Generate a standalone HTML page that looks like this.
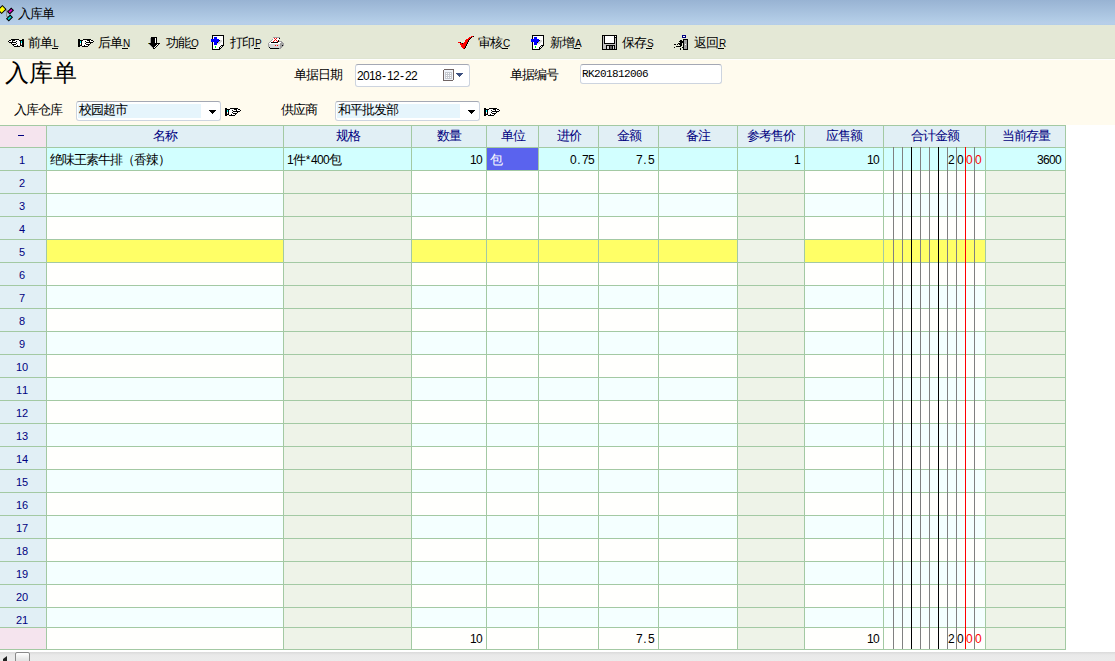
<!DOCTYPE html>
<html><head><meta charset="utf-8"><style>
html,body{margin:0;padding:0;}
body{width:1115px;height:661px;overflow:hidden;position:relative;background:#ffffff;font-family:"Liberation Sans",sans-serif;font-size:12px;color:#000;}
div,span,svg{position:absolute;}
span{white-space:nowrap;line-height:16px;}
.cj{font-size:13px;letter-spacing:-1px;font-weight:500;}
.a{font-family:"Liberation Sans",sans-serif;font-size:12px;}
i{font-style:normal;display:inline-block;width:6px;text-align:center;}
.hd{color:#000080;text-align:center;}
.rn{color:#000080;text-align:center;}
</style></head><body>
<div style="left:0;top:0;width:1115px;height:25px;background:linear-gradient(#98b3d3 0px,#b2cce6 20px,#b8cee9 23px,#b3cde8 25px);"></div>
<svg style="left:0;top:3px" width="16" height="20" viewBox="0 0 16 20"><path d="M4 7.5 H8 M6.5 7.5 V13.5 H8.5" stroke="#909090" fill="none"/><rect x="-0.5" y="3.5" width="5" height="6" transform="rotate(45 2 6.5)" fill="#ffff00" stroke="#000"/><rect x="9" y="5.5" width="3" height="5" transform="rotate(45 10.5 8)" fill="#e000c0" stroke="#000"/><rect x="8" y="12.5" width="3" height="5" transform="rotate(45 9.5 15)" fill="#00d0d0" stroke="#000"/></svg>
<span class="cj" style="left:18px;top:6px">入库单</span>
<div style="left:0;top:25px;width:1115px;height:34px;background:linear-gradient(#e4e8d6 0,#e4e8d6 33px,#dfe4d1 33px);"></div>
<div style="left:0;top:59px;width:1115px;height:1px;background:#ffffff;"></div>
<div style="left:0;top:60px;width:1115px;height:65px;background:#fffbee;"></div>

<span style="left:5px;top:58px;font-size:24px;line-height:30px;font-weight:500">入库单</span>

<span class="cj" style="left:294px;top:67px">单据日期</span>
<div style="left:355px;top:64px;width:113px;height:21px;border:1px solid #cdd4df;border-top-color:#a4a8b4;border-radius:3px;background:#fff"></div>
<span class="a" style="left:357px;top:68px"><i>2</i><i>0</i><i>1</i><i>8</i><i>-</i><i>1</i><i>2</i><i>-</i><i>2</i><i>2</i></span>
<svg style="left:443px;top:69px" width="21" height="13" viewBox="0 0 21 13" shape-rendering="crispEdges">
<rect x="0.5" y="0.5" width="10" height="11" rx="1.5" fill="#f0f4fb" stroke="#706464"/>
<rect x="2" y="3" width="7" height="7" fill="#c4c8d0"/>
<rect x="3" y="4" width="1" height="1" fill="#fff"/><rect x="5" y="4" width="1" height="1" fill="#fff"/><rect x="7" y="4" width="1" height="1" fill="#fff"/>
<rect x="3" y="6" width="1" height="1" fill="#fff"/><rect x="5" y="6" width="1" height="1" fill="#fff"/><rect x="7" y="6" width="1" height="1" fill="#fff"/>
<rect x="3" y="8" width="1" height="1" fill="#fff"/><rect x="5" y="8" width="1" height="1" fill="#fff"/><rect x="7" y="8" width="1" height="1" fill="#fff"/>
<rect x="13" y="4" width="7" height="1" fill="#3c5080"/><rect x="14" y="5" width="5" height="1" fill="#3c5080"/><rect x="15" y="6" width="3" height="1" fill="#3c5080"/><rect x="16" y="7" width="1" height="1" fill="#3c5080"/>
</svg>

<span class="cj" style="left:510px;top:67px">单据编号</span>
<div style="left:580px;top:64px;width:140px;height:18px;border:1px solid #cdd4df;border-top-color:#a4a8b4;border-radius:3px;background:#fff"></div>
<span class="a" style="left:582px;top:66px;font-family:'Liberation Mono',monospace;font-size:11px"><i>R</i><i>K</i><i>2</i><i>0</i><i>1</i><i>8</i><i>1</i><i>2</i><i>0</i><i>0</i><i>6</i></span>

<div style="left:76px;top:101px;width:143px;height:18px;border:1px solid #cdd4df;border-top-color:#a4a8b4;border-radius:3px;background:#fff"></div><div style="left:78px;top:104px;width:123px;height:14px;background:#e6f5fc"></div><span class="cj" style="left:79px;top:102px">校园超市</span><svg style="left:209px;top:110px" width="7" height="4" viewBox="0 0 7 4" shape-rendering="crispEdges"><rect x="0" y="0" width="7" height="1"/><rect x="1" y="1" width="5" height="1"/><rect x="2" y="2" width="3" height="1"/><rect x="3" y="3" width="1" height="1"/></svg><span class="cj" style="left:14px;top:102px">入库仓库</span>
<div style="left:335px;top:101px;width:143px;height:18px;border:1px solid #cdd4df;border-top-color:#a4a8b4;border-radius:3px;background:#fff"></div><div style="left:337px;top:104px;width:123px;height:14px;background:#e6f5fc"></div><span class="cj" style="left:338px;top:102px">和平批发部</span><svg style="left:468px;top:110px" width="7" height="4" viewBox="0 0 7 4" shape-rendering="crispEdges"><rect x="0" y="0" width="7" height="1"/><rect x="1" y="1" width="5" height="1"/><rect x="2" y="2" width="3" height="1"/><rect x="3" y="3" width="1" height="1"/></svg><span class="cj" style="left:281px;top:102px">供应商</span>

<svg style="left:8px;top:39px" width="16" height="8" viewBox="0 0 16 8" shape-rendering="crispEdges"><rect x="3" y="0" width="8" height="1" fill="#000000"/><rect x="14" y="0" width="2" height="1" fill="#000000"/><rect x="1" y="1" width="2" height="1" fill="#000000"/><rect x="3" y="1" width="1" height="1" fill="#ffffff"/><rect x="4" y="1" width="3" height="1" fill="#000000"/><rect x="7" y="1" width="4" height="1" fill="#ffffff"/><rect x="11" y="1" width="5" height="1" fill="#000000"/><rect x="0" y="2" width="1" height="1" fill="#000000"/><rect x="1" y="2" width="3" height="1" fill="#ffffff"/><rect x="4" y="2" width="1" height="1" fill="#000000"/><rect x="5" y="2" width="3" height="1" fill="#ffffff"/><rect x="8" y="2" width="1" height="1" fill="#000000"/><rect x="9" y="2" width="3" height="1" fill="#ffffff"/><rect x="12" y="2" width="1" height="1" fill="#000000"/><rect x="13" y="2" width="1" height="1" fill="#00ffff"/><rect x="14" y="2" width="2" height="1" fill="#000000"/><rect x="1" y="3" width="7" height="1" fill="#000000"/><rect x="8" y="3" width="4" height="1" fill="#ffffff"/><rect x="12" y="3" width="1" height="1" fill="#000000"/><rect x="13" y="3" width="1" height="1" fill="#00ffff"/><rect x="14" y="3" width="2" height="1" fill="#000000"/><rect x="3" y="4" width="1" height="1" fill="#000000"/><rect x="4" y="4" width="4" height="1" fill="#ffffff"/><rect x="8" y="4" width="1" height="1" fill="#000000"/><rect x="9" y="4" width="3" height="1" fill="#ffffff"/><rect x="12" y="4" width="1" height="1" fill="#000000"/><rect x="13" y="4" width="1" height="1" fill="#ffffff"/><rect x="14" y="4" width="2" height="1" fill="#000000"/><rect x="4" y="5" width="4" height="1" fill="#000000"/><rect x="8" y="5" width="4" height="1" fill="#ffffff"/><rect x="12" y="5" width="1" height="1" fill="#000000"/><rect x="13" y="5" width="1" height="1" fill="#f0d0d0"/><rect x="14" y="5" width="2" height="1" fill="#000000"/><rect x="5" y="6" width="1" height="1" fill="#000000"/><rect x="6" y="6" width="3" height="1" fill="#ffffff"/><rect x="9" y="6" width="1" height="1" fill="#000000"/><rect x="10" y="6" width="2" height="1" fill="#ffffff"/><rect x="12" y="6" width="4" height="1" fill="#000000"/><rect x="6" y="7" width="6" height="1" fill="#000000"/><rect x="14" y="7" width="2" height="1" fill="#000000"/></svg><svg style="left:78px;top:39px" width="16" height="8" viewBox="0 0 16 8" shape-rendering="crispEdges"><rect x="0" y="0" width="2" height="1" fill="#000000"/><rect x="5" y="0" width="8" height="1" fill="#000000"/><rect x="0" y="1" width="5" height="1" fill="#000000"/><rect x="5" y="1" width="4" height="1" fill="#ffffff"/><rect x="9" y="1" width="3" height="1" fill="#000000"/><rect x="12" y="1" width="1" height="1" fill="#ffffff"/><rect x="13" y="1" width="2" height="1" fill="#000000"/><rect x="0" y="2" width="2" height="1" fill="#000000"/><rect x="2" y="2" width="1" height="1" fill="#00ffff"/><rect x="3" y="2" width="1" height="1" fill="#000000"/><rect x="4" y="2" width="3" height="1" fill="#ffffff"/><rect x="7" y="2" width="1" height="1" fill="#000000"/><rect x="8" y="2" width="3" height="1" fill="#ffffff"/><rect x="11" y="2" width="1" height="1" fill="#000000"/><rect x="12" y="2" width="3" height="1" fill="#ffffff"/><rect x="15" y="2" width="1" height="1" fill="#000000"/><rect x="0" y="3" width="2" height="1" fill="#000000"/><rect x="2" y="3" width="1" height="1" fill="#00ffff"/><rect x="3" y="3" width="1" height="1" fill="#000000"/><rect x="4" y="3" width="4" height="1" fill="#ffffff"/><rect x="8" y="3" width="7" height="1" fill="#000000"/><rect x="0" y="4" width="2" height="1" fill="#000000"/><rect x="2" y="4" width="1" height="1" fill="#ffffff"/><rect x="3" y="4" width="1" height="1" fill="#000000"/><rect x="4" y="4" width="3" height="1" fill="#ffffff"/><rect x="7" y="4" width="1" height="1" fill="#000000"/><rect x="8" y="4" width="4" height="1" fill="#ffffff"/><rect x="12" y="4" width="1" height="1" fill="#000000"/><rect x="0" y="5" width="2" height="1" fill="#000000"/><rect x="2" y="5" width="1" height="1" fill="#f0d0d0"/><rect x="3" y="5" width="1" height="1" fill="#000000"/><rect x="4" y="5" width="4" height="1" fill="#ffffff"/><rect x="8" y="5" width="4" height="1" fill="#000000"/><rect x="0" y="6" width="4" height="1" fill="#000000"/><rect x="4" y="6" width="2" height="1" fill="#ffffff"/><rect x="6" y="6" width="1" height="1" fill="#000000"/><rect x="7" y="6" width="3" height="1" fill="#ffffff"/><rect x="10" y="6" width="1" height="1" fill="#000000"/><rect x="0" y="7" width="2" height="1" fill="#000000"/><rect x="4" y="7" width="6" height="1" fill="#000000"/></svg><svg style="left:148px;top:37px" width="12" height="12" viewBox="0 0 12 12" shape-rendering="crispEdges"><rect x="3" y="0" width="6" height="1" fill="#000000"/><rect x="2" y="1" width="1" height="1" fill="#a0a0a0"/><rect x="3" y="1" width="4" height="1" fill="#000000"/><rect x="7" y="1" width="1" height="1" fill="#ffffff"/><rect x="8" y="1" width="1" height="1" fill="#000000"/><rect x="2" y="2" width="1" height="1" fill="#a0a0a0"/><rect x="3" y="2" width="4" height="1" fill="#000000"/><rect x="7" y="2" width="1" height="1" fill="#ffffff"/><rect x="8" y="2" width="1" height="1" fill="#000000"/><rect x="2" y="3" width="1" height="1" fill="#a0a0a0"/><rect x="3" y="3" width="4" height="1" fill="#000000"/><rect x="7" y="3" width="1" height="1" fill="#ffffff"/><rect x="8" y="3" width="1" height="1" fill="#000000"/><rect x="2" y="4" width="1" height="1" fill="#a0a0a0"/><rect x="3" y="4" width="4" height="1" fill="#000000"/><rect x="7" y="4" width="1" height="1" fill="#ffffff"/><rect x="8" y="4" width="1" height="1" fill="#000000"/><rect x="2" y="5" width="1" height="1" fill="#a0a0a0"/><rect x="3" y="5" width="4" height="1" fill="#000000"/><rect x="7" y="5" width="1" height="1" fill="#ffffff"/><rect x="8" y="5" width="1" height="1" fill="#000000"/><rect x="0" y="6" width="1" height="1" fill="#808000"/><rect x="1" y="6" width="11" height="1" fill="#000000"/><rect x="1" y="7" width="1" height="1" fill="#a0a0a0"/><rect x="2" y="7" width="7" height="1" fill="#000000"/><rect x="9" y="7" width="1" height="1" fill="#ffffff"/><rect x="10" y="7" width="1" height="1" fill="#000000"/><rect x="2" y="8" width="1" height="1" fill="#a0a0a0"/><rect x="3" y="8" width="5" height="1" fill="#000000"/><rect x="8" y="8" width="1" height="1" fill="#ffffff"/><rect x="9" y="8" width="1" height="1" fill="#000000"/><rect x="3" y="9" width="1" height="1" fill="#a0a0a0"/><rect x="4" y="9" width="3" height="1" fill="#000000"/><rect x="7" y="9" width="1" height="1" fill="#ffffff"/><rect x="8" y="9" width="1" height="1" fill="#000000"/><rect x="4" y="10" width="1" height="1" fill="#a0a0a0"/><rect x="5" y="10" width="1" height="1" fill="#000000"/><rect x="6" y="10" width="1" height="1" fill="#ffffff"/><rect x="7" y="10" width="1" height="1" fill="#000000"/><rect x="5" y="11" width="2" height="1" fill="#000000"/></svg><svg style="left:211px;top:35px" width="13" height="15" viewBox="0 0 13 15" shape-rendering="crispEdges"><rect x="1" y="0" width="12" height="1" fill="#000000"/><rect x="1" y="1" width="1" height="1" fill="#000000"/><rect x="2" y="1" width="10" height="1" fill="#ffffff"/><rect x="12" y="1" width="1" height="1" fill="#000000"/><rect x="1" y="2" width="1" height="1" fill="#000000"/><rect x="2" y="2" width="1" height="1" fill="#ffffff"/><rect x="3" y="2" width="3" height="1" fill="#0000ff"/><rect x="6" y="2" width="6" height="1" fill="#ffffff"/><rect x="12" y="2" width="1" height="1" fill="#000000"/><rect x="1" y="3" width="1" height="1" fill="#000000"/><rect x="2" y="3" width="1" height="1" fill="#ffffff"/><rect x="3" y="3" width="3" height="1" fill="#0000ff"/><rect x="6" y="3" width="6" height="1" fill="#ffffff"/><rect x="12" y="3" width="1" height="1" fill="#000000"/><rect x="0" y="4" width="8" height="1" fill="#0000ff"/><rect x="8" y="4" width="4" height="1" fill="#ffffff"/><rect x="12" y="4" width="1" height="1" fill="#000000"/><rect x="0" y="5" width="8" height="1" fill="#0000ff"/><rect x="8" y="5" width="1" height="1" fill="#000000"/><rect x="9" y="5" width="2" height="1" fill="#d4d4d4"/><rect x="11" y="5" width="1" height="1" fill="#ffffff"/><rect x="12" y="5" width="1" height="1" fill="#000000"/><rect x="0" y="6" width="8" height="1" fill="#0000ff"/><rect x="8" y="6" width="3" height="1" fill="#d4d4d4"/><rect x="11" y="6" width="1" height="1" fill="#ffffff"/><rect x="12" y="6" width="1" height="1" fill="#000000"/><rect x="1" y="7" width="1" height="1" fill="#000000"/><rect x="2" y="7" width="1" height="1" fill="#ffffff"/><rect x="3" y="7" width="3" height="1" fill="#0000ff"/><rect x="6" y="7" width="1" height="1" fill="#000000"/><rect x="7" y="7" width="3" height="1" fill="#d4d4d4"/><rect x="10" y="7" width="2" height="1" fill="#ffffff"/><rect x="12" y="7" width="1" height="1" fill="#000000"/><rect x="1" y="8" width="1" height="1" fill="#000000"/><rect x="2" y="8" width="1" height="1" fill="#ffffff"/><rect x="3" y="8" width="3" height="1" fill="#0000ff"/><rect x="6" y="8" width="3" height="1" fill="#d4d4d4"/><rect x="9" y="8" width="3" height="1" fill="#ffffff"/><rect x="12" y="8" width="1" height="1" fill="#000000"/><rect x="1" y="9" width="1" height="1" fill="#000000"/><rect x="2" y="9" width="1" height="1" fill="#ffffff"/><rect x="3" y="9" width="3" height="1" fill="#0000ff"/><rect x="6" y="9" width="6" height="1" fill="#ffffff"/><rect x="12" y="9" width="1" height="1" fill="#000000"/><rect x="1" y="10" width="1" height="1" fill="#000000"/><rect x="2" y="10" width="8" height="1" fill="#ffffff"/><rect x="10" y="10" width="3" height="1" fill="#000000"/><rect x="1" y="11" width="1" height="1" fill="#000000"/><rect x="2" y="11" width="2" height="1" fill="#ffffff"/><rect x="4" y="11" width="1" height="1" fill="#00ff00"/><rect x="5" y="11" width="4" height="1" fill="#ffffff"/><rect x="9" y="11" width="1" height="1" fill="#000000"/><rect x="10" y="11" width="1" height="1" fill="#ffffff"/><rect x="11" y="11" width="1" height="1" fill="#000000"/><rect x="1" y="12" width="1" height="1" fill="#000000"/><rect x="2" y="12" width="2" height="1" fill="#ffffff"/><rect x="4" y="12" width="1" height="1" fill="#00ff00"/><rect x="5" y="12" width="3" height="1" fill="#ffffff"/><rect x="8" y="12" width="1" height="1" fill="#000000"/><rect x="9" y="12" width="1" height="1" fill="#ffffff"/><rect x="10" y="12" width="1" height="1" fill="#000000"/><rect x="1" y="13" width="1" height="1" fill="#000000"/><rect x="2" y="13" width="6" height="1" fill="#ffffff"/><rect x="8" y="13" width="2" height="1" fill="#000000"/><rect x="1" y="14" width="8" height="1" fill="#000000"/></svg><svg style="left:268px;top:37px" width="16" height="12" viewBox="0 0 16 12" shape-rendering="crispEdges"><rect x="5" y="0" width="7" height="1" fill="#a0a0a0"/><rect x="5" y="1" width="1" height="1" fill="#ffffff"/><rect x="6" y="1" width="1" height="1" fill="#ff0000"/><rect x="7" y="1" width="1" height="1" fill="#ffffff"/><rect x="8" y="1" width="1" height="1" fill="#ff0000"/><rect x="9" y="1" width="2" height="1" fill="#ffffff"/><rect x="11" y="1" width="1" height="1" fill="#000000"/><rect x="4" y="2" width="1" height="1" fill="#a0a0a0"/><rect x="5" y="2" width="2" height="1" fill="#ffffff"/><rect x="7" y="2" width="1" height="1" fill="#ff0000"/><rect x="8" y="2" width="3" height="1" fill="#ffffff"/><rect x="3" y="3" width="1" height="1" fill="#a0a0a0"/><rect x="4" y="3" width="2" height="1" fill="#ffffff"/><rect x="6" y="3" width="1" height="1" fill="#ff0000"/><rect x="7" y="3" width="1" height="1" fill="#ffffff"/><rect x="8" y="3" width="1" height="1" fill="#ff0000"/><rect x="9" y="3" width="1" height="1" fill="#ffffff"/><rect x="10" y="3" width="1" height="1" fill="#000000"/><rect x="2" y="4" width="1" height="1" fill="#a0a0a0"/><rect x="3" y="4" width="2" height="1" fill="#ffffff"/><rect x="5" y="4" width="1" height="1" fill="#ff0000"/><rect x="6" y="4" width="3" height="1" fill="#ffffff"/><rect x="9" y="4" width="1" height="1" fill="#ff0000"/><rect x="10" y="4" width="1" height="1" fill="#000000"/><rect x="11" y="4" width="3" height="1" fill="#a0a0a0"/><rect x="1" y="5" width="1" height="1" fill="#a0a0a0"/><rect x="2" y="5" width="1" height="1" fill="#ffffff"/><rect x="3" y="5" width="7" height="1" fill="#000000"/><rect x="10" y="5" width="3" height="1" fill="#ffffff"/><rect x="13" y="5" width="2" height="1" fill="#a0a0a0"/><rect x="0" y="6" width="1" height="1" fill="#a0a0a0"/><rect x="1" y="6" width="11" height="1" fill="#ffffff"/><rect x="12" y="6" width="4" height="1" fill="#a0a0a0"/><rect x="0" y="7" width="1" height="1" fill="#a0a0a0"/><rect x="1" y="7" width="11" height="1" fill="#d4d4d4"/><rect x="12" y="7" width="4" height="1" fill="#a0a0a0"/><rect x="0" y="8" width="1" height="1" fill="#a0a0a0"/><rect x="1" y="8" width="6" height="1" fill="#d4d4d4"/><rect x="7" y="8" width="1" height="1" fill="#ff0000"/><rect x="8" y="8" width="1" height="1" fill="#d4d4d4"/><rect x="9" y="8" width="1" height="1" fill="#ff0000"/><rect x="10" y="8" width="2" height="1" fill="#d4d4d4"/><rect x="12" y="8" width="2" height="1" fill="#a0a0a0"/><rect x="14" y="8" width="1" height="1" fill="#000000"/><rect x="15" y="8" width="1" height="1" fill="#a0a0a0"/><rect x="0" y="9" width="1" height="1" fill="#a0a0a0"/><rect x="1" y="9" width="11" height="1" fill="#d4d4d4"/><rect x="12" y="9" width="3" height="1" fill="#a0a0a0"/><rect x="1" y="10" width="1" height="1" fill="#000000"/><rect x="2" y="10" width="10" height="1" fill="#d4d4d4"/><rect x="12" y="10" width="2" height="1" fill="#a0a0a0"/><rect x="2" y="11" width="9" height="1" fill="#000000"/><rect x="11" y="11" width="2" height="1" fill="#a0a0a0"/></svg><svg style="left:531px;top:35px" width="13" height="15" viewBox="0 0 13 15" shape-rendering="crispEdges"><rect x="1" y="0" width="12" height="1" fill="#000000"/><rect x="1" y="1" width="1" height="1" fill="#000000"/><rect x="2" y="1" width="10" height="1" fill="#ffffff"/><rect x="12" y="1" width="1" height="1" fill="#000000"/><rect x="1" y="2" width="1" height="1" fill="#000000"/><rect x="2" y="2" width="1" height="1" fill="#ffffff"/><rect x="3" y="2" width="3" height="1" fill="#0000ff"/><rect x="6" y="2" width="6" height="1" fill="#ffffff"/><rect x="12" y="2" width="1" height="1" fill="#000000"/><rect x="1" y="3" width="1" height="1" fill="#000000"/><rect x="2" y="3" width="1" height="1" fill="#ffffff"/><rect x="3" y="3" width="3" height="1" fill="#0000ff"/><rect x="6" y="3" width="6" height="1" fill="#ffffff"/><rect x="12" y="3" width="1" height="1" fill="#000000"/><rect x="0" y="4" width="8" height="1" fill="#0000ff"/><rect x="8" y="4" width="4" height="1" fill="#ffffff"/><rect x="12" y="4" width="1" height="1" fill="#000000"/><rect x="0" y="5" width="8" height="1" fill="#0000ff"/><rect x="8" y="5" width="1" height="1" fill="#000000"/><rect x="9" y="5" width="2" height="1" fill="#d4d4d4"/><rect x="11" y="5" width="1" height="1" fill="#ffffff"/><rect x="12" y="5" width="1" height="1" fill="#000000"/><rect x="0" y="6" width="8" height="1" fill="#0000ff"/><rect x="8" y="6" width="3" height="1" fill="#d4d4d4"/><rect x="11" y="6" width="1" height="1" fill="#ffffff"/><rect x="12" y="6" width="1" height="1" fill="#000000"/><rect x="1" y="7" width="1" height="1" fill="#000000"/><rect x="2" y="7" width="1" height="1" fill="#ffffff"/><rect x="3" y="7" width="3" height="1" fill="#0000ff"/><rect x="6" y="7" width="1" height="1" fill="#000000"/><rect x="7" y="7" width="3" height="1" fill="#d4d4d4"/><rect x="10" y="7" width="2" height="1" fill="#ffffff"/><rect x="12" y="7" width="1" height="1" fill="#000000"/><rect x="1" y="8" width="1" height="1" fill="#000000"/><rect x="2" y="8" width="1" height="1" fill="#ffffff"/><rect x="3" y="8" width="3" height="1" fill="#0000ff"/><rect x="6" y="8" width="3" height="1" fill="#d4d4d4"/><rect x="9" y="8" width="3" height="1" fill="#ffffff"/><rect x="12" y="8" width="1" height="1" fill="#000000"/><rect x="1" y="9" width="1" height="1" fill="#000000"/><rect x="2" y="9" width="1" height="1" fill="#ffffff"/><rect x="3" y="9" width="3" height="1" fill="#0000ff"/><rect x="6" y="9" width="6" height="1" fill="#ffffff"/><rect x="12" y="9" width="1" height="1" fill="#000000"/><rect x="1" y="10" width="1" height="1" fill="#000000"/><rect x="2" y="10" width="8" height="1" fill="#ffffff"/><rect x="10" y="10" width="3" height="1" fill="#000000"/><rect x="1" y="11" width="1" height="1" fill="#000000"/><rect x="2" y="11" width="2" height="1" fill="#ffffff"/><rect x="4" y="11" width="1" height="1" fill="#00ff00"/><rect x="5" y="11" width="4" height="1" fill="#ffffff"/><rect x="9" y="11" width="1" height="1" fill="#000000"/><rect x="10" y="11" width="1" height="1" fill="#ffffff"/><rect x="11" y="11" width="1" height="1" fill="#000000"/><rect x="1" y="12" width="1" height="1" fill="#000000"/><rect x="2" y="12" width="2" height="1" fill="#ffffff"/><rect x="4" y="12" width="1" height="1" fill="#00ff00"/><rect x="5" y="12" width="3" height="1" fill="#ffffff"/><rect x="8" y="12" width="1" height="1" fill="#000000"/><rect x="9" y="12" width="1" height="1" fill="#ffffff"/><rect x="10" y="12" width="1" height="1" fill="#000000"/><rect x="1" y="13" width="1" height="1" fill="#000000"/><rect x="2" y="13" width="6" height="1" fill="#ffffff"/><rect x="8" y="13" width="2" height="1" fill="#000000"/><rect x="1" y="14" width="8" height="1" fill="#000000"/></svg><svg style="left:602px;top:35px" width="15" height="15" viewBox="0 0 15 15" shape-rendering="crispEdges"><rect x="0" y="0" width="15" height="1" fill="#000000"/><rect x="0" y="1" width="1" height="1" fill="#000000"/><rect x="1" y="1" width="1" height="1" fill="#c0c0c0"/><rect x="2" y="1" width="1" height="1" fill="#000000"/><rect x="3" y="1" width="9" height="1" fill="#ffffff"/><rect x="12" y="1" width="1" height="1" fill="#000000"/><rect x="13" y="1" width="1" height="1" fill="#ffffff"/><rect x="14" y="1" width="1" height="1" fill="#000000"/><rect x="0" y="2" width="1" height="1" fill="#000000"/><rect x="1" y="2" width="1" height="1" fill="#c0c0c0"/><rect x="2" y="2" width="1" height="1" fill="#000000"/><rect x="3" y="2" width="9" height="1" fill="#ffffff"/><rect x="12" y="2" width="3" height="1" fill="#000000"/><rect x="0" y="3" width="1" height="1" fill="#000000"/><rect x="1" y="3" width="1" height="1" fill="#c0c0c0"/><rect x="2" y="3" width="1" height="1" fill="#000000"/><rect x="3" y="3" width="9" height="1" fill="#ffffff"/><rect x="12" y="3" width="1" height="1" fill="#000000"/><rect x="13" y="3" width="1" height="1" fill="#c0c0c0"/><rect x="14" y="3" width="1" height="1" fill="#000000"/><rect x="0" y="4" width="1" height="1" fill="#000000"/><rect x="1" y="4" width="1" height="1" fill="#c0c0c0"/><rect x="2" y="4" width="1" height="1" fill="#000000"/><rect x="3" y="4" width="9" height="1" fill="#ffffff"/><rect x="12" y="4" width="1" height="1" fill="#000000"/><rect x="13" y="4" width="1" height="1" fill="#c0c0c0"/><rect x="14" y="4" width="1" height="1" fill="#000000"/><rect x="0" y="5" width="1" height="1" fill="#000000"/><rect x="1" y="5" width="1" height="1" fill="#c0c0c0"/><rect x="2" y="5" width="1" height="1" fill="#000000"/><rect x="3" y="5" width="9" height="1" fill="#ffffff"/><rect x="12" y="5" width="1" height="1" fill="#000000"/><rect x="13" y="5" width="1" height="1" fill="#c0c0c0"/><rect x="14" y="5" width="1" height="1" fill="#000000"/><rect x="0" y="6" width="1" height="1" fill="#000000"/><rect x="1" y="6" width="1" height="1" fill="#c0c0c0"/><rect x="2" y="6" width="1" height="1" fill="#000000"/><rect x="3" y="6" width="9" height="1" fill="#ffffff"/><rect x="12" y="6" width="1" height="1" fill="#000000"/><rect x="13" y="6" width="1" height="1" fill="#c0c0c0"/><rect x="14" y="6" width="1" height="1" fill="#000000"/><rect x="0" y="7" width="1" height="1" fill="#000000"/><rect x="1" y="7" width="1" height="1" fill="#c0c0c0"/><rect x="2" y="7" width="1" height="1" fill="#000000"/><rect x="3" y="7" width="9" height="1" fill="#ffffff"/><rect x="12" y="7" width="1" height="1" fill="#000000"/><rect x="13" y="7" width="1" height="1" fill="#c0c0c0"/><rect x="14" y="7" width="1" height="1" fill="#000000"/><rect x="0" y="8" width="1" height="1" fill="#000000"/><rect x="1" y="8" width="1" height="1" fill="#c0c0c0"/><rect x="2" y="8" width="11" height="1" fill="#000000"/><rect x="13" y="8" width="1" height="1" fill="#c0c0c0"/><rect x="14" y="8" width="1" height="1" fill="#000000"/><rect x="0" y="9" width="1" height="1" fill="#000000"/><rect x="1" y="9" width="13" height="1" fill="#c0c0c0"/><rect x="14" y="9" width="1" height="1" fill="#000000"/><rect x="0" y="10" width="1" height="1" fill="#000000"/><rect x="1" y="10" width="3" height="1" fill="#c0c0c0"/><rect x="4" y="10" width="9" height="1" fill="#000000"/><rect x="13" y="10" width="1" height="1" fill="#c0c0c0"/><rect x="14" y="10" width="1" height="1" fill="#000000"/><rect x="0" y="11" width="1" height="1" fill="#000000"/><rect x="1" y="11" width="3" height="1" fill="#c0c0c0"/><rect x="4" y="11" width="1" height="1" fill="#000000"/><rect x="5" y="11" width="2" height="1" fill="#d4d4d4"/><rect x="7" y="11" width="1" height="1" fill="#000000"/><rect x="8" y="11" width="2" height="1" fill="#606060"/><rect x="10" y="11" width="1" height="1" fill="#000000"/><rect x="11" y="11" width="1" height="1" fill="#d4d4d4"/><rect x="12" y="11" width="1" height="1" fill="#000000"/><rect x="13" y="11" width="1" height="1" fill="#c0c0c0"/><rect x="14" y="11" width="1" height="1" fill="#000000"/><rect x="0" y="12" width="1" height="1" fill="#000000"/><rect x="1" y="12" width="3" height="1" fill="#c0c0c0"/><rect x="4" y="12" width="1" height="1" fill="#000000"/><rect x="5" y="12" width="2" height="1" fill="#d4d4d4"/><rect x="7" y="12" width="1" height="1" fill="#000000"/><rect x="8" y="12" width="2" height="1" fill="#606060"/><rect x="10" y="12" width="1" height="1" fill="#000000"/><rect x="11" y="12" width="1" height="1" fill="#d4d4d4"/><rect x="12" y="12" width="1" height="1" fill="#000000"/><rect x="13" y="12" width="1" height="1" fill="#c0c0c0"/><rect x="14" y="12" width="1" height="1" fill="#000000"/><rect x="0" y="13" width="1" height="1" fill="#000000"/><rect x="1" y="13" width="3" height="1" fill="#c0c0c0"/><rect x="4" y="13" width="1" height="1" fill="#000000"/><rect x="5" y="13" width="2" height="1" fill="#d4d4d4"/><rect x="7" y="13" width="1" height="1" fill="#000000"/><rect x="8" y="13" width="2" height="1" fill="#606060"/><rect x="10" y="13" width="1" height="1" fill="#000000"/><rect x="11" y="13" width="1" height="1" fill="#d4d4d4"/><rect x="12" y="13" width="1" height="1" fill="#000000"/><rect x="13" y="13" width="1" height="1" fill="#c0c0c0"/><rect x="14" y="13" width="1" height="1" fill="#000000"/><rect x="0" y="14" width="15" height="1" fill="#000000"/></svg><svg style="left:674px;top:35px" width="14" height="15" viewBox="0 0 14 15" shape-rendering="crispEdges"><rect x="8" y="0" width="4" height="1" fill="#000080"/><rect x="8" y="1" width="1" height="1" fill="#000080"/><rect x="9" y="1" width="2" height="1" fill="#ffffff"/><rect x="11" y="1" width="1" height="1" fill="#000080"/><rect x="8" y="2" width="4" height="1" fill="#000080"/><rect x="9" y="4" width="5" height="1" fill="#000000"/><rect x="6" y="5" width="2" height="1" fill="#000000"/><rect x="9" y="5" width="1" height="1" fill="#000000"/><rect x="10" y="5" width="3" height="1" fill="#a0a0a0"/><rect x="13" y="5" width="1" height="1" fill="#000000"/><rect x="5" y="6" width="5" height="1" fill="#000000"/><rect x="10" y="6" width="3" height="1" fill="#a0a0a0"/><rect x="13" y="6" width="1" height="1" fill="#000000"/><rect x="6" y="7" width="4" height="1" fill="#000000"/><rect x="10" y="7" width="3" height="1" fill="#a0a0a0"/><rect x="13" y="7" width="1" height="1" fill="#000000"/><rect x="4" y="8" width="4" height="1" fill="#000000"/><rect x="9" y="8" width="1" height="1" fill="#000000"/><rect x="10" y="8" width="3" height="1" fill="#a0a0a0"/><rect x="13" y="8" width="1" height="1" fill="#000000"/><rect x="0" y="9" width="2" height="1" fill="#000000"/><rect x="3" y="9" width="1" height="1" fill="#000000"/><rect x="5" y="9" width="3" height="1" fill="#000000"/><rect x="9" y="9" width="1" height="1" fill="#000000"/><rect x="10" y="9" width="1" height="1" fill="#a0a0a0"/><rect x="11" y="9" width="1" height="1" fill="#ffffff"/><rect x="12" y="9" width="1" height="1" fill="#a0a0a0"/><rect x="13" y="9" width="1" height="1" fill="#000000"/><rect x="6" y="10" width="2" height="1" fill="#000000"/><rect x="9" y="10" width="1" height="1" fill="#000000"/><rect x="10" y="10" width="3" height="1" fill="#a0a0a0"/><rect x="13" y="10" width="1" height="1" fill="#000000"/><rect x="2" y="11" width="5" height="1" fill="#000000"/><rect x="9" y="11" width="1" height="1" fill="#000000"/><rect x="10" y="11" width="3" height="1" fill="#a0a0a0"/><rect x="13" y="11" width="1" height="1" fill="#000000"/><rect x="0" y="12" width="1" height="1" fill="#000000"/><rect x="8" y="12" width="2" height="1" fill="#000000"/><rect x="10" y="12" width="3" height="1" fill="#a0a0a0"/><rect x="13" y="12" width="1" height="1" fill="#000000"/><rect x="6" y="13" width="1" height="1" fill="#000000"/><rect x="9" y="13" width="1" height="1" fill="#000000"/><rect x="10" y="13" width="3" height="1" fill="#a0a0a0"/><rect x="13" y="13" width="1" height="1" fill="#000000"/><rect x="6" y="14" width="1" height="1" fill="#000000"/><rect x="9" y="14" width="5" height="1" fill="#000000"/></svg><svg style="left:225px;top:108px" width="16" height="8" viewBox="0 0 16 8" shape-rendering="crispEdges"><rect x="0" y="0" width="2" height="1" fill="#000000"/><rect x="5" y="0" width="8" height="1" fill="#000000"/><rect x="0" y="1" width="5" height="1" fill="#000000"/><rect x="5" y="1" width="4" height="1" fill="#ffffff"/><rect x="9" y="1" width="3" height="1" fill="#000000"/><rect x="12" y="1" width="1" height="1" fill="#ffffff"/><rect x="13" y="1" width="2" height="1" fill="#000000"/><rect x="0" y="2" width="2" height="1" fill="#000000"/><rect x="2" y="2" width="1" height="1" fill="#00ffff"/><rect x="3" y="2" width="1" height="1" fill="#000000"/><rect x="4" y="2" width="3" height="1" fill="#ffffff"/><rect x="7" y="2" width="1" height="1" fill="#000000"/><rect x="8" y="2" width="3" height="1" fill="#ffffff"/><rect x="11" y="2" width="1" height="1" fill="#000000"/><rect x="12" y="2" width="3" height="1" fill="#ffffff"/><rect x="15" y="2" width="1" height="1" fill="#000000"/><rect x="0" y="3" width="2" height="1" fill="#000000"/><rect x="2" y="3" width="1" height="1" fill="#00ffff"/><rect x="3" y="3" width="1" height="1" fill="#000000"/><rect x="4" y="3" width="4" height="1" fill="#ffffff"/><rect x="8" y="3" width="7" height="1" fill="#000000"/><rect x="0" y="4" width="2" height="1" fill="#000000"/><rect x="2" y="4" width="1" height="1" fill="#ffffff"/><rect x="3" y="4" width="1" height="1" fill="#000000"/><rect x="4" y="4" width="3" height="1" fill="#ffffff"/><rect x="7" y="4" width="1" height="1" fill="#000000"/><rect x="8" y="4" width="4" height="1" fill="#ffffff"/><rect x="12" y="4" width="1" height="1" fill="#000000"/><rect x="0" y="5" width="2" height="1" fill="#000000"/><rect x="2" y="5" width="1" height="1" fill="#f0d0d0"/><rect x="3" y="5" width="1" height="1" fill="#000000"/><rect x="4" y="5" width="4" height="1" fill="#ffffff"/><rect x="8" y="5" width="4" height="1" fill="#000000"/><rect x="0" y="6" width="4" height="1" fill="#000000"/><rect x="4" y="6" width="2" height="1" fill="#ffffff"/><rect x="6" y="6" width="1" height="1" fill="#000000"/><rect x="7" y="6" width="3" height="1" fill="#ffffff"/><rect x="10" y="6" width="1" height="1" fill="#000000"/><rect x="0" y="7" width="2" height="1" fill="#000000"/><rect x="4" y="7" width="6" height="1" fill="#000000"/></svg><svg style="left:484px;top:108px" width="16" height="8" viewBox="0 0 16 8" shape-rendering="crispEdges"><rect x="0" y="0" width="2" height="1" fill="#000000"/><rect x="5" y="0" width="8" height="1" fill="#000000"/><rect x="0" y="1" width="5" height="1" fill="#000000"/><rect x="5" y="1" width="4" height="1" fill="#ffffff"/><rect x="9" y="1" width="3" height="1" fill="#000000"/><rect x="12" y="1" width="1" height="1" fill="#ffffff"/><rect x="13" y="1" width="2" height="1" fill="#000000"/><rect x="0" y="2" width="2" height="1" fill="#000000"/><rect x="2" y="2" width="1" height="1" fill="#00ffff"/><rect x="3" y="2" width="1" height="1" fill="#000000"/><rect x="4" y="2" width="3" height="1" fill="#ffffff"/><rect x="7" y="2" width="1" height="1" fill="#000000"/><rect x="8" y="2" width="3" height="1" fill="#ffffff"/><rect x="11" y="2" width="1" height="1" fill="#000000"/><rect x="12" y="2" width="3" height="1" fill="#ffffff"/><rect x="15" y="2" width="1" height="1" fill="#000000"/><rect x="0" y="3" width="2" height="1" fill="#000000"/><rect x="2" y="3" width="1" height="1" fill="#00ffff"/><rect x="3" y="3" width="1" height="1" fill="#000000"/><rect x="4" y="3" width="4" height="1" fill="#ffffff"/><rect x="8" y="3" width="7" height="1" fill="#000000"/><rect x="0" y="4" width="2" height="1" fill="#000000"/><rect x="2" y="4" width="1" height="1" fill="#ffffff"/><rect x="3" y="4" width="1" height="1" fill="#000000"/><rect x="4" y="4" width="3" height="1" fill="#ffffff"/><rect x="7" y="4" width="1" height="1" fill="#000000"/><rect x="8" y="4" width="4" height="1" fill="#ffffff"/><rect x="12" y="4" width="1" height="1" fill="#000000"/><rect x="0" y="5" width="2" height="1" fill="#000000"/><rect x="2" y="5" width="1" height="1" fill="#f0d0d0"/><rect x="3" y="5" width="1" height="1" fill="#000000"/><rect x="4" y="5" width="4" height="1" fill="#ffffff"/><rect x="8" y="5" width="4" height="1" fill="#000000"/><rect x="0" y="6" width="4" height="1" fill="#000000"/><rect x="4" y="6" width="2" height="1" fill="#ffffff"/><rect x="6" y="6" width="1" height="1" fill="#000000"/><rect x="7" y="6" width="3" height="1" fill="#ffffff"/><rect x="10" y="6" width="1" height="1" fill="#000000"/><rect x="0" y="7" width="2" height="1" fill="#000000"/><rect x="4" y="7" width="6" height="1" fill="#000000"/></svg><svg style="left:458px;top:36px" width="16" height="13" viewBox="0 0 16 13" shape-rendering="crispEdges"><rect x="13" y="0" width="2" height="1" fill="#ff0000"/><rect x="15" y="0" width="1" height="1" fill="#000000"/><rect x="11" y="1" width="2" height="1" fill="#ff0000"/><rect x="13" y="1" width="1" height="1" fill="#000000"/><rect x="10" y="2" width="2" height="1" fill="#ff0000"/><rect x="12" y="2" width="1" height="1" fill="#000000"/><rect x="8" y="3" width="3" height="1" fill="#ff0000"/><rect x="11" y="3" width="1" height="1" fill="#000000"/><rect x="7" y="4" width="3" height="1" fill="#ff0000"/><rect x="10" y="4" width="1" height="1" fill="#000000"/><rect x="7" y="5" width="3" height="1" fill="#ff0000"/><rect x="10" y="5" width="1" height="1" fill="#000000"/><rect x="0" y="6" width="2" height="1" fill="#ff0000"/><rect x="2" y="6" width="1" height="1" fill="#000000"/><rect x="6" y="6" width="3" height="1" fill="#ff0000"/><rect x="9" y="6" width="1" height="1" fill="#000000"/><rect x="2" y="7" width="2" height="1" fill="#ff0000"/><rect x="4" y="7" width="1" height="1" fill="#000000"/><rect x="5" y="7" width="4" height="1" fill="#ff0000"/><rect x="9" y="7" width="1" height="1" fill="#000000"/><rect x="2" y="8" width="6" height="1" fill="#ff0000"/><rect x="8" y="8" width="1" height="1" fill="#000000"/><rect x="3" y="9" width="5" height="1" fill="#ff0000"/><rect x="8" y="9" width="1" height="1" fill="#000000"/><rect x="3" y="10" width="4" height="1" fill="#ff0000"/><rect x="7" y="10" width="1" height="1" fill="#000000"/><rect x="4" y="11" width="3" height="1" fill="#ff0000"/><rect x="7" y="11" width="1" height="1" fill="#000000"/><rect x="5" y="12" width="1" height="1" fill="#ff0000"/><rect x="6" y="12" width="1" height="1" fill="#000000"/></svg><span class="cj" style="left:28px;top:35px">前单</span><span class="a" style="left:53px;top:36px;font-size:10px;font-weight:normal"><i>L</i></span><div style="left:52px;top:48px;width:6px;height:1px;background:#000"></div><span class="cj" style="left:98px;top:35px">后单</span><span class="a" style="left:123px;top:36px;font-size:10px;font-weight:normal"><i>N</i></span><div style="left:122px;top:48px;width:6px;height:1px;background:#000"></div><span class="cj" style="left:166px;top:35px">功能</span><span class="a" style="left:191px;top:36px;font-size:10px;font-weight:normal"><i>O</i></span><div style="left:190px;top:48px;width:6px;height:1px;background:#000"></div><span class="cj" style="left:230px;top:35px">打印</span><span class="a" style="left:255px;top:36px;font-size:10px;font-weight:normal"><i>P</i></span><div style="left:254px;top:48px;width:6px;height:1px;background:#000"></div><span class="cj" style="left:478px;top:35px">审核</span><span class="a" style="left:503px;top:36px;font-size:10px;font-weight:normal"><i>C</i></span><div style="left:502px;top:48px;width:6px;height:1px;background:#000"></div><span class="cj" style="left:550px;top:35px">新增</span><span class="a" style="left:575px;top:36px;font-size:10px;font-weight:normal"><i>A</i></span><div style="left:574px;top:48px;width:6px;height:1px;background:#000"></div><span class="cj" style="left:622px;top:35px">保存</span><span class="a" style="left:647px;top:36px;font-size:10px;font-weight:normal"><i>S</i></span><div style="left:646px;top:48px;width:6px;height:1px;background:#000"></div><span class="cj" style="left:694px;top:35px">返回</span><span class="a" style="left:719px;top:36px;font-size:10px;font-weight:normal"><i>R</i></span><div style="left:718px;top:48px;width:6px;height:1px;background:#000"></div>
<div style="left:0px;top:125px;width:1066px;height:525px;background:#a3c9a3;"></div><div style="left:0px;top:126px;width:46px;height:21px;background:#f5e4ee;"></div><div style="left:47px;top:126px;width:236px;height:21px;background:#e1eff5;"></div><div style="left:284px;top:126px;width:127px;height:21px;background:#e1eff5;"></div><div style="left:412px;top:126px;width:74px;height:21px;background:#e1eff5;"></div><div style="left:487px;top:126px;width:51px;height:21px;background:#e1eff5;"></div><div style="left:539px;top:126px;width:59px;height:21px;background:#e1eff5;"></div><div style="left:599px;top:126px;width:59px;height:21px;background:#e1eff5;"></div><div style="left:659px;top:126px;width:78px;height:21px;background:#e1eff5;"></div><div style="left:738px;top:126px;width:66px;height:21px;background:#e1eff5;"></div><div style="left:805px;top:126px;width:78px;height:21px;background:#e1eff5;"></div><div style="left:884px;top:126px;width:101px;height:21px;background:#e1eff5;"></div><div style="left:986px;top:126px;width:79px;height:21px;background:#e1eff5;"></div><div style="left:0px;top:148px;width:46px;height:22px;background:#e1eff5;"></div><div style="left:47px;top:148px;width:236px;height:22px;background:#d2ffff;"></div><div style="left:284px;top:148px;width:127px;height:22px;background:#d2ffff;"></div><div style="left:412px;top:148px;width:74px;height:22px;background:#d2ffff;"></div><div style="left:487px;top:148px;width:51px;height:22px;background:#5a63ee;"></div><div style="left:539px;top:148px;width:59px;height:22px;background:#d2ffff;"></div><div style="left:599px;top:148px;width:59px;height:22px;background:#d2ffff;"></div><div style="left:659px;top:148px;width:78px;height:22px;background:#d2ffff;"></div><div style="left:738px;top:148px;width:66px;height:22px;background:#d2ffff;"></div><div style="left:805px;top:148px;width:78px;height:22px;background:#d2ffff;"></div><div style="left:884px;top:148px;width:101px;height:22px;background:#d2ffff;"></div><div style="left:986px;top:148px;width:79px;height:22px;background:#d2ffff;"></div><div style="left:0px;top:171px;width:46px;height:22px;background:#e1eff5;"></div><div style="left:47px;top:171px;width:236px;height:22px;background:#fffffd;"></div><div style="left:284px;top:171px;width:127px;height:22px;background:#eef3e8;"></div><div style="left:412px;top:171px;width:74px;height:22px;background:#fffffd;"></div><div style="left:487px;top:171px;width:51px;height:22px;background:#fffffd;"></div><div style="left:539px;top:171px;width:59px;height:22px;background:#fffffd;"></div><div style="left:599px;top:171px;width:59px;height:22px;background:#fffffd;"></div><div style="left:659px;top:171px;width:78px;height:22px;background:#fffffd;"></div><div style="left:738px;top:171px;width:66px;height:22px;background:#eef3e8;"></div><div style="left:805px;top:171px;width:78px;height:22px;background:#fffffd;"></div><div style="left:884px;top:171px;width:101px;height:22px;background:#fffffd;"></div><div style="left:986px;top:171px;width:79px;height:22px;background:#eef3e8;"></div><div style="left:0px;top:194px;width:46px;height:22px;background:#e1eff5;"></div><div style="left:47px;top:194px;width:236px;height:22px;background:#f4ffff;"></div><div style="left:284px;top:194px;width:127px;height:22px;background:#eef3e8;"></div><div style="left:412px;top:194px;width:74px;height:22px;background:#f4ffff;"></div><div style="left:487px;top:194px;width:51px;height:22px;background:#f4ffff;"></div><div style="left:539px;top:194px;width:59px;height:22px;background:#f4ffff;"></div><div style="left:599px;top:194px;width:59px;height:22px;background:#f4ffff;"></div><div style="left:659px;top:194px;width:78px;height:22px;background:#f4ffff;"></div><div style="left:738px;top:194px;width:66px;height:22px;background:#eef3e8;"></div><div style="left:805px;top:194px;width:78px;height:22px;background:#f4ffff;"></div><div style="left:884px;top:194px;width:101px;height:22px;background:#f4ffff;"></div><div style="left:986px;top:194px;width:79px;height:22px;background:#eef3e8;"></div><div style="left:0px;top:217px;width:46px;height:22px;background:#e1eff5;"></div><div style="left:47px;top:217px;width:236px;height:22px;background:#fffffd;"></div><div style="left:284px;top:217px;width:127px;height:22px;background:#eef3e8;"></div><div style="left:412px;top:217px;width:74px;height:22px;background:#fffffd;"></div><div style="left:487px;top:217px;width:51px;height:22px;background:#fffffd;"></div><div style="left:539px;top:217px;width:59px;height:22px;background:#fffffd;"></div><div style="left:599px;top:217px;width:59px;height:22px;background:#fffffd;"></div><div style="left:659px;top:217px;width:78px;height:22px;background:#fffffd;"></div><div style="left:738px;top:217px;width:66px;height:22px;background:#eef3e8;"></div><div style="left:805px;top:217px;width:78px;height:22px;background:#fffffd;"></div><div style="left:884px;top:217px;width:101px;height:22px;background:#fffffd;"></div><div style="left:986px;top:217px;width:79px;height:22px;background:#eef3e8;"></div><div style="left:0px;top:240px;width:46px;height:22px;background:#e1eff5;"></div><div style="left:47px;top:240px;width:236px;height:22px;background:#ffff66;"></div><div style="left:284px;top:240px;width:127px;height:22px;background:#eef3e8;"></div><div style="left:412px;top:240px;width:74px;height:22px;background:#ffff66;"></div><div style="left:487px;top:240px;width:51px;height:22px;background:#ffff66;"></div><div style="left:539px;top:240px;width:59px;height:22px;background:#ffff66;"></div><div style="left:599px;top:240px;width:59px;height:22px;background:#ffff66;"></div><div style="left:659px;top:240px;width:78px;height:22px;background:#ffff66;"></div><div style="left:738px;top:240px;width:66px;height:22px;background:#eef3e8;"></div><div style="left:805px;top:240px;width:78px;height:22px;background:#ffff66;"></div><div style="left:884px;top:240px;width:101px;height:22px;background:#ffff66;"></div><div style="left:986px;top:240px;width:79px;height:22px;background:#eef3e8;"></div><div style="left:0px;top:263px;width:46px;height:22px;background:#e1eff5;"></div><div style="left:47px;top:263px;width:236px;height:22px;background:#fffffd;"></div><div style="left:284px;top:263px;width:127px;height:22px;background:#eef3e8;"></div><div style="left:412px;top:263px;width:74px;height:22px;background:#fffffd;"></div><div style="left:487px;top:263px;width:51px;height:22px;background:#fffffd;"></div><div style="left:539px;top:263px;width:59px;height:22px;background:#fffffd;"></div><div style="left:599px;top:263px;width:59px;height:22px;background:#fffffd;"></div><div style="left:659px;top:263px;width:78px;height:22px;background:#fffffd;"></div><div style="left:738px;top:263px;width:66px;height:22px;background:#eef3e8;"></div><div style="left:805px;top:263px;width:78px;height:22px;background:#fffffd;"></div><div style="left:884px;top:263px;width:101px;height:22px;background:#fffffd;"></div><div style="left:986px;top:263px;width:79px;height:22px;background:#eef3e8;"></div><div style="left:0px;top:286px;width:46px;height:22px;background:#e1eff5;"></div><div style="left:47px;top:286px;width:236px;height:22px;background:#f4ffff;"></div><div style="left:284px;top:286px;width:127px;height:22px;background:#eef3e8;"></div><div style="left:412px;top:286px;width:74px;height:22px;background:#f4ffff;"></div><div style="left:487px;top:286px;width:51px;height:22px;background:#f4ffff;"></div><div style="left:539px;top:286px;width:59px;height:22px;background:#f4ffff;"></div><div style="left:599px;top:286px;width:59px;height:22px;background:#f4ffff;"></div><div style="left:659px;top:286px;width:78px;height:22px;background:#f4ffff;"></div><div style="left:738px;top:286px;width:66px;height:22px;background:#eef3e8;"></div><div style="left:805px;top:286px;width:78px;height:22px;background:#f4ffff;"></div><div style="left:884px;top:286px;width:101px;height:22px;background:#f4ffff;"></div><div style="left:986px;top:286px;width:79px;height:22px;background:#eef3e8;"></div><div style="left:0px;top:309px;width:46px;height:22px;background:#e1eff5;"></div><div style="left:47px;top:309px;width:236px;height:22px;background:#fffffd;"></div><div style="left:284px;top:309px;width:127px;height:22px;background:#eef3e8;"></div><div style="left:412px;top:309px;width:74px;height:22px;background:#fffffd;"></div><div style="left:487px;top:309px;width:51px;height:22px;background:#fffffd;"></div><div style="left:539px;top:309px;width:59px;height:22px;background:#fffffd;"></div><div style="left:599px;top:309px;width:59px;height:22px;background:#fffffd;"></div><div style="left:659px;top:309px;width:78px;height:22px;background:#fffffd;"></div><div style="left:738px;top:309px;width:66px;height:22px;background:#eef3e8;"></div><div style="left:805px;top:309px;width:78px;height:22px;background:#fffffd;"></div><div style="left:884px;top:309px;width:101px;height:22px;background:#fffffd;"></div><div style="left:986px;top:309px;width:79px;height:22px;background:#eef3e8;"></div><div style="left:0px;top:332px;width:46px;height:22px;background:#e1eff5;"></div><div style="left:47px;top:332px;width:236px;height:22px;background:#f4ffff;"></div><div style="left:284px;top:332px;width:127px;height:22px;background:#eef3e8;"></div><div style="left:412px;top:332px;width:74px;height:22px;background:#f4ffff;"></div><div style="left:487px;top:332px;width:51px;height:22px;background:#f4ffff;"></div><div style="left:539px;top:332px;width:59px;height:22px;background:#f4ffff;"></div><div style="left:599px;top:332px;width:59px;height:22px;background:#f4ffff;"></div><div style="left:659px;top:332px;width:78px;height:22px;background:#f4ffff;"></div><div style="left:738px;top:332px;width:66px;height:22px;background:#eef3e8;"></div><div style="left:805px;top:332px;width:78px;height:22px;background:#f4ffff;"></div><div style="left:884px;top:332px;width:101px;height:22px;background:#f4ffff;"></div><div style="left:986px;top:332px;width:79px;height:22px;background:#eef3e8;"></div><div style="left:0px;top:355px;width:46px;height:22px;background:#e1eff5;"></div><div style="left:47px;top:355px;width:236px;height:22px;background:#fffffd;"></div><div style="left:284px;top:355px;width:127px;height:22px;background:#eef3e8;"></div><div style="left:412px;top:355px;width:74px;height:22px;background:#fffffd;"></div><div style="left:487px;top:355px;width:51px;height:22px;background:#fffffd;"></div><div style="left:539px;top:355px;width:59px;height:22px;background:#fffffd;"></div><div style="left:599px;top:355px;width:59px;height:22px;background:#fffffd;"></div><div style="left:659px;top:355px;width:78px;height:22px;background:#fffffd;"></div><div style="left:738px;top:355px;width:66px;height:22px;background:#eef3e8;"></div><div style="left:805px;top:355px;width:78px;height:22px;background:#fffffd;"></div><div style="left:884px;top:355px;width:101px;height:22px;background:#fffffd;"></div><div style="left:986px;top:355px;width:79px;height:22px;background:#eef3e8;"></div><div style="left:0px;top:378px;width:46px;height:22px;background:#e1eff5;"></div><div style="left:47px;top:378px;width:236px;height:22px;background:#f4ffff;"></div><div style="left:284px;top:378px;width:127px;height:22px;background:#eef3e8;"></div><div style="left:412px;top:378px;width:74px;height:22px;background:#f4ffff;"></div><div style="left:487px;top:378px;width:51px;height:22px;background:#f4ffff;"></div><div style="left:539px;top:378px;width:59px;height:22px;background:#f4ffff;"></div><div style="left:599px;top:378px;width:59px;height:22px;background:#f4ffff;"></div><div style="left:659px;top:378px;width:78px;height:22px;background:#f4ffff;"></div><div style="left:738px;top:378px;width:66px;height:22px;background:#eef3e8;"></div><div style="left:805px;top:378px;width:78px;height:22px;background:#f4ffff;"></div><div style="left:884px;top:378px;width:101px;height:22px;background:#f4ffff;"></div><div style="left:986px;top:378px;width:79px;height:22px;background:#eef3e8;"></div><div style="left:0px;top:401px;width:46px;height:22px;background:#e1eff5;"></div><div style="left:47px;top:401px;width:236px;height:22px;background:#fffffd;"></div><div style="left:284px;top:401px;width:127px;height:22px;background:#eef3e8;"></div><div style="left:412px;top:401px;width:74px;height:22px;background:#fffffd;"></div><div style="left:487px;top:401px;width:51px;height:22px;background:#fffffd;"></div><div style="left:539px;top:401px;width:59px;height:22px;background:#fffffd;"></div><div style="left:599px;top:401px;width:59px;height:22px;background:#fffffd;"></div><div style="left:659px;top:401px;width:78px;height:22px;background:#fffffd;"></div><div style="left:738px;top:401px;width:66px;height:22px;background:#eef3e8;"></div><div style="left:805px;top:401px;width:78px;height:22px;background:#fffffd;"></div><div style="left:884px;top:401px;width:101px;height:22px;background:#fffffd;"></div><div style="left:986px;top:401px;width:79px;height:22px;background:#eef3e8;"></div><div style="left:0px;top:424px;width:46px;height:22px;background:#e1eff5;"></div><div style="left:47px;top:424px;width:236px;height:22px;background:#f4ffff;"></div><div style="left:284px;top:424px;width:127px;height:22px;background:#eef3e8;"></div><div style="left:412px;top:424px;width:74px;height:22px;background:#f4ffff;"></div><div style="left:487px;top:424px;width:51px;height:22px;background:#f4ffff;"></div><div style="left:539px;top:424px;width:59px;height:22px;background:#f4ffff;"></div><div style="left:599px;top:424px;width:59px;height:22px;background:#f4ffff;"></div><div style="left:659px;top:424px;width:78px;height:22px;background:#f4ffff;"></div><div style="left:738px;top:424px;width:66px;height:22px;background:#eef3e8;"></div><div style="left:805px;top:424px;width:78px;height:22px;background:#f4ffff;"></div><div style="left:884px;top:424px;width:101px;height:22px;background:#f4ffff;"></div><div style="left:986px;top:424px;width:79px;height:22px;background:#eef3e8;"></div><div style="left:0px;top:447px;width:46px;height:22px;background:#e1eff5;"></div><div style="left:47px;top:447px;width:236px;height:22px;background:#fffffd;"></div><div style="left:284px;top:447px;width:127px;height:22px;background:#eef3e8;"></div><div style="left:412px;top:447px;width:74px;height:22px;background:#fffffd;"></div><div style="left:487px;top:447px;width:51px;height:22px;background:#fffffd;"></div><div style="left:539px;top:447px;width:59px;height:22px;background:#fffffd;"></div><div style="left:599px;top:447px;width:59px;height:22px;background:#fffffd;"></div><div style="left:659px;top:447px;width:78px;height:22px;background:#fffffd;"></div><div style="left:738px;top:447px;width:66px;height:22px;background:#eef3e8;"></div><div style="left:805px;top:447px;width:78px;height:22px;background:#fffffd;"></div><div style="left:884px;top:447px;width:101px;height:22px;background:#fffffd;"></div><div style="left:986px;top:447px;width:79px;height:22px;background:#eef3e8;"></div><div style="left:0px;top:470px;width:46px;height:22px;background:#e1eff5;"></div><div style="left:47px;top:470px;width:236px;height:22px;background:#f4ffff;"></div><div style="left:284px;top:470px;width:127px;height:22px;background:#eef3e8;"></div><div style="left:412px;top:470px;width:74px;height:22px;background:#f4ffff;"></div><div style="left:487px;top:470px;width:51px;height:22px;background:#f4ffff;"></div><div style="left:539px;top:470px;width:59px;height:22px;background:#f4ffff;"></div><div style="left:599px;top:470px;width:59px;height:22px;background:#f4ffff;"></div><div style="left:659px;top:470px;width:78px;height:22px;background:#f4ffff;"></div><div style="left:738px;top:470px;width:66px;height:22px;background:#eef3e8;"></div><div style="left:805px;top:470px;width:78px;height:22px;background:#f4ffff;"></div><div style="left:884px;top:470px;width:101px;height:22px;background:#f4ffff;"></div><div style="left:986px;top:470px;width:79px;height:22px;background:#eef3e8;"></div><div style="left:0px;top:493px;width:46px;height:22px;background:#e1eff5;"></div><div style="left:47px;top:493px;width:236px;height:22px;background:#fffffd;"></div><div style="left:284px;top:493px;width:127px;height:22px;background:#eef3e8;"></div><div style="left:412px;top:493px;width:74px;height:22px;background:#fffffd;"></div><div style="left:487px;top:493px;width:51px;height:22px;background:#fffffd;"></div><div style="left:539px;top:493px;width:59px;height:22px;background:#fffffd;"></div><div style="left:599px;top:493px;width:59px;height:22px;background:#fffffd;"></div><div style="left:659px;top:493px;width:78px;height:22px;background:#fffffd;"></div><div style="left:738px;top:493px;width:66px;height:22px;background:#eef3e8;"></div><div style="left:805px;top:493px;width:78px;height:22px;background:#fffffd;"></div><div style="left:884px;top:493px;width:101px;height:22px;background:#fffffd;"></div><div style="left:986px;top:493px;width:79px;height:22px;background:#eef3e8;"></div><div style="left:0px;top:516px;width:46px;height:22px;background:#e1eff5;"></div><div style="left:47px;top:516px;width:236px;height:22px;background:#f4ffff;"></div><div style="left:284px;top:516px;width:127px;height:22px;background:#eef3e8;"></div><div style="left:412px;top:516px;width:74px;height:22px;background:#f4ffff;"></div><div style="left:487px;top:516px;width:51px;height:22px;background:#f4ffff;"></div><div style="left:539px;top:516px;width:59px;height:22px;background:#f4ffff;"></div><div style="left:599px;top:516px;width:59px;height:22px;background:#f4ffff;"></div><div style="left:659px;top:516px;width:78px;height:22px;background:#f4ffff;"></div><div style="left:738px;top:516px;width:66px;height:22px;background:#eef3e8;"></div><div style="left:805px;top:516px;width:78px;height:22px;background:#f4ffff;"></div><div style="left:884px;top:516px;width:101px;height:22px;background:#f4ffff;"></div><div style="left:986px;top:516px;width:79px;height:22px;background:#eef3e8;"></div><div style="left:0px;top:539px;width:46px;height:22px;background:#e1eff5;"></div><div style="left:47px;top:539px;width:236px;height:22px;background:#fffffd;"></div><div style="left:284px;top:539px;width:127px;height:22px;background:#eef3e8;"></div><div style="left:412px;top:539px;width:74px;height:22px;background:#fffffd;"></div><div style="left:487px;top:539px;width:51px;height:22px;background:#fffffd;"></div><div style="left:539px;top:539px;width:59px;height:22px;background:#fffffd;"></div><div style="left:599px;top:539px;width:59px;height:22px;background:#fffffd;"></div><div style="left:659px;top:539px;width:78px;height:22px;background:#fffffd;"></div><div style="left:738px;top:539px;width:66px;height:22px;background:#eef3e8;"></div><div style="left:805px;top:539px;width:78px;height:22px;background:#fffffd;"></div><div style="left:884px;top:539px;width:101px;height:22px;background:#fffffd;"></div><div style="left:986px;top:539px;width:79px;height:22px;background:#eef3e8;"></div><div style="left:0px;top:562px;width:46px;height:22px;background:#e1eff5;"></div><div style="left:47px;top:562px;width:236px;height:22px;background:#f4ffff;"></div><div style="left:284px;top:562px;width:127px;height:22px;background:#eef3e8;"></div><div style="left:412px;top:562px;width:74px;height:22px;background:#f4ffff;"></div><div style="left:487px;top:562px;width:51px;height:22px;background:#f4ffff;"></div><div style="left:539px;top:562px;width:59px;height:22px;background:#f4ffff;"></div><div style="left:599px;top:562px;width:59px;height:22px;background:#f4ffff;"></div><div style="left:659px;top:562px;width:78px;height:22px;background:#f4ffff;"></div><div style="left:738px;top:562px;width:66px;height:22px;background:#eef3e8;"></div><div style="left:805px;top:562px;width:78px;height:22px;background:#f4ffff;"></div><div style="left:884px;top:562px;width:101px;height:22px;background:#f4ffff;"></div><div style="left:986px;top:562px;width:79px;height:22px;background:#eef3e8;"></div><div style="left:0px;top:585px;width:46px;height:22px;background:#e1eff5;"></div><div style="left:47px;top:585px;width:236px;height:22px;background:#fffffd;"></div><div style="left:284px;top:585px;width:127px;height:22px;background:#eef3e8;"></div><div style="left:412px;top:585px;width:74px;height:22px;background:#fffffd;"></div><div style="left:487px;top:585px;width:51px;height:22px;background:#fffffd;"></div><div style="left:539px;top:585px;width:59px;height:22px;background:#fffffd;"></div><div style="left:599px;top:585px;width:59px;height:22px;background:#fffffd;"></div><div style="left:659px;top:585px;width:78px;height:22px;background:#fffffd;"></div><div style="left:738px;top:585px;width:66px;height:22px;background:#eef3e8;"></div><div style="left:805px;top:585px;width:78px;height:22px;background:#fffffd;"></div><div style="left:884px;top:585px;width:101px;height:22px;background:#fffffd;"></div><div style="left:986px;top:585px;width:79px;height:22px;background:#eef3e8;"></div><div style="left:0px;top:608px;width:46px;height:19px;background:#e1eff5;"></div><div style="left:47px;top:608px;width:236px;height:19px;background:#f4ffff;"></div><div style="left:284px;top:608px;width:127px;height:19px;background:#eef3e8;"></div><div style="left:412px;top:608px;width:74px;height:19px;background:#f4ffff;"></div><div style="left:487px;top:608px;width:51px;height:19px;background:#f4ffff;"></div><div style="left:539px;top:608px;width:59px;height:19px;background:#f4ffff;"></div><div style="left:599px;top:608px;width:59px;height:19px;background:#f4ffff;"></div><div style="left:659px;top:608px;width:78px;height:19px;background:#f4ffff;"></div><div style="left:738px;top:608px;width:66px;height:19px;background:#eef3e8;"></div><div style="left:805px;top:608px;width:78px;height:19px;background:#f4ffff;"></div><div style="left:884px;top:608px;width:101px;height:19px;background:#f4ffff;"></div><div style="left:986px;top:608px;width:79px;height:19px;background:#eef3e8;"></div><div style="left:0px;top:628px;width:46px;height:21px;background:#f5e4ee;"></div><div style="left:47px;top:628px;width:236px;height:21px;background:#fffffd;"></div><div style="left:284px;top:628px;width:127px;height:21px;background:#eef3e8;"></div><div style="left:412px;top:628px;width:74px;height:21px;background:#fffffd;"></div><div style="left:487px;top:628px;width:51px;height:21px;background:#fffffd;"></div><div style="left:539px;top:628px;width:59px;height:21px;background:#fffffd;"></div><div style="left:599px;top:628px;width:59px;height:21px;background:#fffffd;"></div><div style="left:659px;top:628px;width:78px;height:21px;background:#fffffd;"></div><div style="left:738px;top:628px;width:66px;height:21px;background:#eef3e8;"></div><div style="left:805px;top:628px;width:78px;height:21px;background:#fffffd;"></div><div style="left:884px;top:628px;width:101px;height:21px;background:#fffffd;"></div><div style="left:986px;top:628px;width:79px;height:21px;background:#eef3e8;"></div><div style="left:893px;top:147px;width:1px;height:502px;background:#808080;"></div><div style="left:902px;top:147px;width:1px;height:502px;background:#808080;"></div><div style="left:911px;top:147px;width:1px;height:502px;background:#000000;"></div><div style="left:920px;top:147px;width:1px;height:502px;background:#808080;"></div><div style="left:929px;top:147px;width:1px;height:502px;background:#808080;"></div><div style="left:938px;top:147px;width:1px;height:502px;background:#000000;"></div><div style="left:947px;top:147px;width:1px;height:502px;background:#808080;"></div><div style="left:956px;top:147px;width:1px;height:502px;background:#808080;"></div><div style="left:965px;top:147px;width:1px;height:502px;background:#ff0000;"></div><div style="left:974px;top:147px;width:1px;height:502px;background:#808080;"></div>
<span class="cj hd" style="left:47px;top:128px;width:236px">名称</span><span class="cj hd" style="left:284px;top:128px;width:127px">规格</span><span class="cj hd" style="left:412px;top:128px;width:74px">数量</span><span class="cj hd" style="left:487px;top:128px;width:51px">单位</span><span class="cj hd" style="left:539px;top:128px;width:59px">进价</span><span class="cj hd" style="left:599px;top:128px;width:59px">金额</span><span class="cj hd" style="left:659px;top:128px;width:78px">备注</span><span class="cj hd" style="left:738px;top:128px;width:66px">参考售价</span><span class="cj hd" style="left:805px;top:128px;width:78px">应售额</span><span class="cj hd" style="left:884px;top:128px;width:101px">合计金额</span><span class="cj hd" style="left:986px;top:128px;width:79px">当前存量</span><div style="left:18px;top:135px;width:6px;height:1px;background:#000080"></div><span class="a rn" style="left:-1px;top:152px;width:46px;font-size:11px"><i>1</i></span><span class="a rn" style="left:-1px;top:175px;width:46px;font-size:11px"><i>2</i></span><span class="a rn" style="left:-1px;top:198px;width:46px;font-size:11px"><i>3</i></span><span class="a rn" style="left:-1px;top:221px;width:46px;font-size:11px"><i>4</i></span><span class="a rn" style="left:-1px;top:244px;width:46px;font-size:11px"><i>5</i></span><span class="a rn" style="left:-1px;top:267px;width:46px;font-size:11px"><i>6</i></span><span class="a rn" style="left:-1px;top:290px;width:46px;font-size:11px"><i>7</i></span><span class="a rn" style="left:-1px;top:313px;width:46px;font-size:11px"><i>8</i></span><span class="a rn" style="left:-1px;top:336px;width:46px;font-size:11px"><i>9</i></span><span class="a rn" style="left:-1px;top:359px;width:46px;font-size:11px"><i>1</i><i>0</i></span><span class="a rn" style="left:-1px;top:382px;width:46px;font-size:11px"><i>1</i><i>1</i></span><span class="a rn" style="left:-1px;top:405px;width:46px;font-size:11px"><i>1</i><i>2</i></span><span class="a rn" style="left:-1px;top:428px;width:46px;font-size:11px"><i>1</i><i>3</i></span><span class="a rn" style="left:-1px;top:451px;width:46px;font-size:11px"><i>1</i><i>4</i></span><span class="a rn" style="left:-1px;top:474px;width:46px;font-size:11px"><i>1</i><i>5</i></span><span class="a rn" style="left:-1px;top:497px;width:46px;font-size:11px"><i>1</i><i>6</i></span><span class="a rn" style="left:-1px;top:520px;width:46px;font-size:11px"><i>1</i><i>7</i></span><span class="a rn" style="left:-1px;top:543px;width:46px;font-size:11px"><i>1</i><i>8</i></span><span class="a rn" style="left:-1px;top:566px;width:46px;font-size:11px"><i>1</i><i>9</i></span><span class="a rn" style="left:-1px;top:589px;width:46px;font-size:11px"><i>2</i><i>0</i></span><span class="a rn" style="left:-1px;top:612px;width:46px;font-size:11px"><i>2</i><i>1</i></span><span class="cj" style="left:50px;top:152px">绝味王素牛排（香辣）</span><span style="left:287px;top:152px"><span class="a" style="position:static"><i>1</i></span><span class="cj" style="position:static">件</span><span class="a" style="position:static"><i>*</i><i>4</i><i>0</i><i>0</i></span><span class="cj" style="position:static">包</span></span><span class="a" style="left:412px;top:152px;width:70px;text-align:right"><i>1</i><i>0</i></span><span class="cj" style="left:490px;top:152px;color:#fff">包</span><span class="a" style="left:539px;top:152px;width:55px;text-align:right"><i>0</i><i>.</i><i>7</i><i>5</i></span><span class="a" style="left:599px;top:152px;width:55px;text-align:right"><i>7</i><i>.</i><i>5</i></span><span class="a" style="left:738px;top:152px;width:62px;text-align:right"><i>1</i></span><span class="a" style="left:805px;top:152px;width:74px;text-align:right"><i>1</i><i>0</i></span><span class="a" style="left:986px;top:152px;width:75px;text-align:right"><i>3</i><i>6</i><i>0</i><i>0</i></span><span class="a" style="left:412px;top:631px;width:70px;text-align:right"><i>1</i><i>0</i></span><span class="a" style="left:599px;top:631px;width:55px;text-align:right"><i>7</i><i>.</i><i>5</i></span><span class="a" style="left:805px;top:631px;width:74px;text-align:right"><i>1</i><i>0</i></span><span class="a" style="left:948px;top:152px;color:#000"><i>2</i></span><span class="a" style="left:948px;top:631px;color:#000"><i>2</i></span><span class="a" style="left:957px;top:152px;color:#000"><i>0</i></span><span class="a" style="left:957px;top:631px;color:#000"><i>0</i></span><span class="a" style="left:966px;top:152px;color:#f00"><i>0</i></span><span class="a" style="left:966px;top:631px;color:#f00"><i>0</i></span><span class="a" style="left:975px;top:152px;color:#f00"><i>0</i></span><span class="a" style="left:975px;top:631px;color:#f00"><i>0</i></span>
<div style="left:0;top:650px;width:1115px;height:11px;background:linear-gradient(#ffffff 0px,#ffffff 2px,#dadada 2px,#e9e9e9 5px,#ebebeb 11px);"></div>
<svg style="left:2px;top:655px" width="6" height="6" viewBox="0 0 6 6"><path d="M1 4 L5 1 L5 6 L1 6 Z" fill="#222"/></svg>
<div style="left:15px;top:652px;width:13px;height:12px;border:1px solid #8a8a8a;border-radius:2px;background:linear-gradient(#ffffff,#e8e8e8 50%,#d8d8d8)"></div>
</body></html>
